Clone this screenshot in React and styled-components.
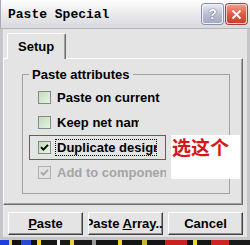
import styled, { createGlobalStyle } from "styled-components"

const GlobalStyle = createGlobalStyle`
    html, body {
        margin: 0;
        padding: 0;
        background: #ffffff;
    }

    body {
        width: 250px;
        height: 245px;
        overflow: hidden;
        font-family: "Liberation Sans", Arial, sans-serif;
    }
`

const Screen = styled.div`
    width: 250px;
    height: 245px;
    display: flex;
    flex-direction: column;
    overflow: hidden;
`

const Window = styled.div`
    position: relative;
    height: 240px;
    display: flex;
    flex-direction: column;
    flex-shrink: 0;
`

const TitleBar = styled.div`
    height: 29px;
    box-sizing: border-box;
    display: flex;
    align-items: center;
    gap: 3px;
    padding: 0 3px 0 7px;
    background: linear-gradient(#fdfdfd, #ececef 45%, #d9d9de);
    border-bottom: 1px solid #b4b4ba;
    border-left: 1px solid #a8a8ae;
`

const Title = styled.div`
    flex: 1;
    font-family: "Liberation Mono", "Courier New", monospace;
    font-weight: bold;
    font-size: 13px;
    line-height: 15px;
    color: #000;
    padding-top: 1px;
`

const CaptionButton = styled.div`
    width: 21px;
    height: 20px;
    box-sizing: border-box;
    border-radius: 3px;
    border: 1px solid ${(p) => (p.$close ? "#f4d0c8" : "#f0f0f6")};
    box-shadow: 0 0 0 1px ${(p) => (p.$close ? "#a84030" : "#8890aa")};
    background: ${(p) =>
        p.$close
            ? "linear-gradient(#f29a88, #e0553e 55%, #c8402c)"
            : "linear-gradient(#e6e8f2, #b9bdd2 55%, #a4a9c2)"};
    display: flex;
    align-items: center;
    justify-content: center;
    color: #fff;
    font-family: "Liberation Sans", Arial, sans-serif;
    font-weight: bold;
    font-size: 14px;
    text-shadow: 0 0 1px #4a5070, 0 0 1px #4a5070;
`

const Body = styled.div`
    flex: 1;
    display: flex;
    flex-direction: column;
    background: #e4e4e4;
    border: 3px solid #c6c6ca;
    border-top: none;
    box-shadow: inset 1px 0 0 #ededed;
`

const TabRow = styled.div`
    display: flex;
    margin-top: 4px;
    padding-left: 4px;
`

const Tab = styled.div`
    position: relative;
    z-index: 1;
    width: 59px;
    height: 26px;
    box-sizing: border-box;
    margin-bottom: -1px;
    padding: 5px 0 0 10px;
    background: #e4e4e4;
    border: 1px solid #ffffff;
    border-bottom: none;
    border-right: 1px solid #6e6e6e;
    border-radius: 2px 2px 0 0;
    box-shadow: inset -1px 0 0 #a0a0a0;
    font-weight: bold;
    font-size: 13px;
    line-height: 15px;
    color: #000;
`

const Panel = styled.div`
    height: 147px;
    margin-right: 4px;
    box-sizing: border-box;
    padding: 8px 12px 0 18px;
    border: 1px solid #ffffff;
    border-right-color: #6e6e6e;
    border-bottom-color: #6e6e6e;
    box-shadow: inset -1px -1px 0 #a0a0a0;
`

const Group = styled.fieldset`
    margin: 0;
    height: 127px;
    box-sizing: border-box;
    padding: 3px 0 0 6px;
    border: 1px solid #a2a2a2;
    display: flex;
    flex-direction: column;
`

const Legend = styled.legend`
    padding: 0 3px;
    font-weight: bold;
    font-size: 13px;
    line-height: 15px;
    color: #000;
`

const Row = styled.div`
    width: 137px;
    height: 25px;
    box-sizing: border-box;
    display: flex;
    align-items: center;
    padding-left: 9px;
    box-shadow: ${(p) => (p.$marked ? "inset 0 0 0 1px #e02a2a" : "none")};
`

const Box = styled.span`
    width: 13px;
    height: 13px;
    box-sizing: border-box;
    flex-shrink: 0;
    margin-right: 4px;
    border: 1px solid ${(p) => (p.$disabled ? "#b0b0b0" : "#868a86")};
    background: ${(p) =>
        p.$disabled ? "#e2e2e2" : "linear-gradient(135deg, #c2dcbc, #e6f4e2)"};
    display: flex;
    align-items: center;
    justify-content: center;
`

const Label = styled.span`
    display: block;
    max-width: ${(p) => p.$clip}px;
    overflow: hidden;
    white-space: nowrap;
    padding: 0 2px;
    font-weight: bold;
    font-size: 13px;
    line-height: 17px;
    color: ${(p) => (p.$disabled ? "#a4a4a4" : "#000")};
    outline: ${(p) => (p.$focused ? "1px dotted #000" : "none")};
    outline-offset: -1px;
`

const Note = styled.div`
    position: absolute;
    left: 171px;
    top: 135px;
    width: 69px;
    height: 44px;
    background: #ffffff;
    padding: 1px 0 0 1px;
    box-sizing: border-box;
    font-family: "Noto Sans CJK SC", sans-serif;
    font-weight: bold;
    font-size: 19px;
    line-height: 22px;
    color: #d81414;
`

const ButtonRow = styled.div`
    display: flex;
    gap: 5px;
    margin-top: 7px;
    padding-left: 5px;
`

const Button = styled.div`
    width: 75px;
    height: 23px;
    box-sizing: border-box;
    overflow: hidden;
    display: flex;
    align-items: center;
    justify-content: center;
    white-space: nowrap;
    background: #e4e4e4;
    border: 1px solid #ffffff;
    border-right-color: #404040;
    border-bottom-color: #404040;
    box-shadow: inset -1px -1px 0 #909090;
    font-weight: bold;
    font-size: 13px;
    color: #000;
`

const Stripe = styled.div`
    height: 5px;
    display: flex;
    flex-shrink: 0;
`

const Bit = styled.span`
    flex: 0 0 ${(p) => p.$w}px;
    background: ${(p) => p.$c};
`

const stripe = [
    [9, "#1d3fe0"], [3, "#f0d22a"], [9, "#111"], [10, "#2a48d8"], [6, "#111"],
    [4, "#f2d830"], [16, "#161616"], [3, "#f4f4f4"], [10, "#1a1a1a"], [4, "#e8d040"],
    [18, "#181818"], [4, "#9a9a9a"], [22, "#141414"], [4, "#f0d62c"], [20, "#151515"],
    [5, "#c8b830"], [18, "#141414"], [22, "#cc2020"], [6, "#111"], [4, "#f0d82e"],
    [14, "#161616"], [18, "#d02424"], [21, "#1a1a1a"],
]

function Check({ disabled }) {
    return (
        <svg width="9" height="9" viewBox="0 0 9 9">
            <path
                d="M1 4.2 L3.4 6.6 L8 1.8"
                fill="none"
                stroke={disabled ? "#a8a8a8" : "#000"}
                strokeWidth="1.9"
            />
        </svg>
    )
}

const options = [
    { label: "Paste on current", clip: 120 },
    { label: "Keep net name", clip: 80 },
    { label: "Duplicate designator", clip: 98, checked: true, marked: true, focused: true },
    { label: "Add to component class", clip: 140, checked: true, disabled: true },
]

export default function App() {
    return (
        <Screen>
            <GlobalStyle />
            <Window>
                <TitleBar>
                    <Title>Paste Special</Title>
                    <CaptionButton>?</CaptionButton>
                    <CaptionButton $close>
                        <svg width="11" height="11" viewBox="0 0 11 11">
                            <path d="M1.5 1.5 L9.5 9.5 M9.5 1.5 L1.5 9.5" stroke="#fff" strokeWidth="2" />
                        </svg>
                    </CaptionButton>
                </TitleBar>
                <Body>
                    <TabRow>
                        <Tab>Setup</Tab>
                    </TabRow>
                    <Panel>
                        <Group>
                            <Legend>Paste attributes</Legend>
                            {options.map((o) => (
                                <Row key={o.label} $marked={o.marked}>
                                    <Box $disabled={o.disabled}>
                                        {o.checked && <Check disabled={o.disabled} />}
                                    </Box>
                                    <Label $clip={o.clip} $disabled={o.disabled} $focused={o.focused}>
                                        {o.label}
                                    </Label>
                                </Row>
                            ))}
                        </Group>
                    </Panel>
                    <ButtonRow>
                        <Button><span><u>P</u>aste</span></Button>
                        <Button><span>Paste <u>A</u>rray...</span></Button>
                        <Button><span>Cancel</span></Button>
                    </ButtonRow>
                </Body>
                <Note>选这个</Note>
            </Window>
            <Stripe>
                {stripe.map(([w, c], i) => (
                    <Bit key={i} $w={w} $c={c} />
                ))}
            </Stripe>
        </Screen>
    )
}
